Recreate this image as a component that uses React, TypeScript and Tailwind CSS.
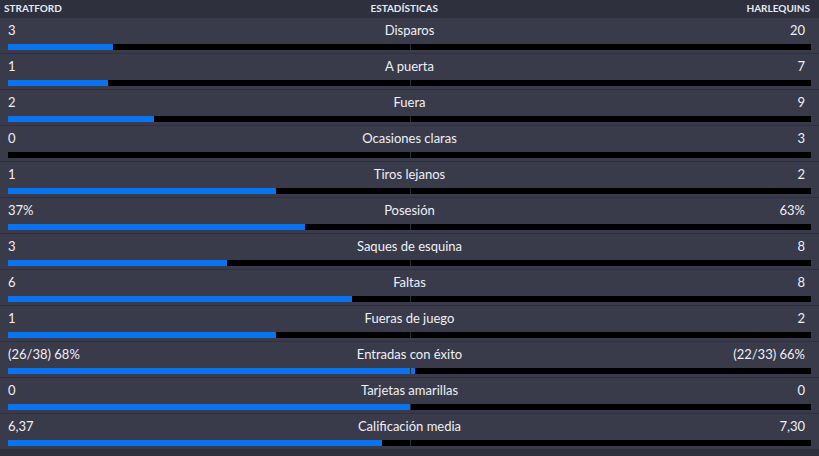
import React from "react";

const rows: { l: string; r: string; label: string; lv: number; rv: number }[] = [
  { l: "3", r: "20", label: "Disparos", lv: 3, rv: 20 },
  { l: "1", r: "7", label: "A puerta", lv: 1, rv: 7 },
  { l: "2", r: "9", label: "Fuera", lv: 2, rv: 9 },
  { l: "0", r: "3", label: "Ocasiones claras", lv: 0, rv: 3 },
  { l: "1", r: "2", label: "Tiros lejanos", lv: 1, rv: 2 },
  { l: "37%", r: "63%", label: "Posesión", lv: 37, rv: 63 },
  { l: "3", r: "8", label: "Saques de esquina", lv: 3, rv: 8 },
  { l: "6", r: "8", label: "Faltas", lv: 6, rv: 8 },
  { l: "1", r: "2", label: "Fueras de juego", lv: 1, rv: 2 },
  { l: "(26/38) 68%", r: "(22/33) 66%", label: "Entradas con éxito", lv: 68, rv: 66 },
  { l: "0", r: "0", label: "Tarjetas amarillas", lv: 0, rv: 0 },
  { l: "6,37", r: "7,30", label: "Calificación media", lv: 6.37, rv: 7.3 },
];

export default function App() {
  return (
    <div
      className="w-[819px] h-[456px] bg-[#2e303d] overflow-hidden text-[#eef0f6]"
      style={{ fontFamily: "Lato, 'Open Sans', sans-serif" }}
    >
      <div className="h-[17px] flex items-center justify-between px-[4px] text-[10px] font-bold text-[#e6eaf5] uppercase">
        <span>Stratford</span>
        <span>Estadísticas</span>
        <span className="pr-[5px]">Harlequins</span>
      </div>
      <div className="flex flex-col gap-[1px] pt-[1px]">
        {rows.map((r, i) => {
          const total = r.lv + r.rv;
          const pct = total === 0 ? 50 : (r.lv / total) * 100;
          return (
            <div key={i} className="h-[35px] bg-[#393b4a] px-[8px] flex flex-col">
              <div className="h-[16px] mt-[4px] flex items-center justify-between text-[13px] leading-[16px]">
                <span className="w-[200px]">{r.l}</span>
                <span className="flex-1 text-center">{r.label}</span>
                <span className="w-[200px] text-right pr-[6px]">{r.r}</span>
              </div>
              <div className="mt-[6px] h-[6px] bg-black relative">
                <div className="h-full bg-[#0a74f0]" style={{ width: `${pct}%` }} />
                <div className="absolute left-1/2 top-0 h-full w-[1px] bg-[#2a2c36]" />
              </div>
            </div>
          );
        })}
      </div>
    </div>
  );
}
